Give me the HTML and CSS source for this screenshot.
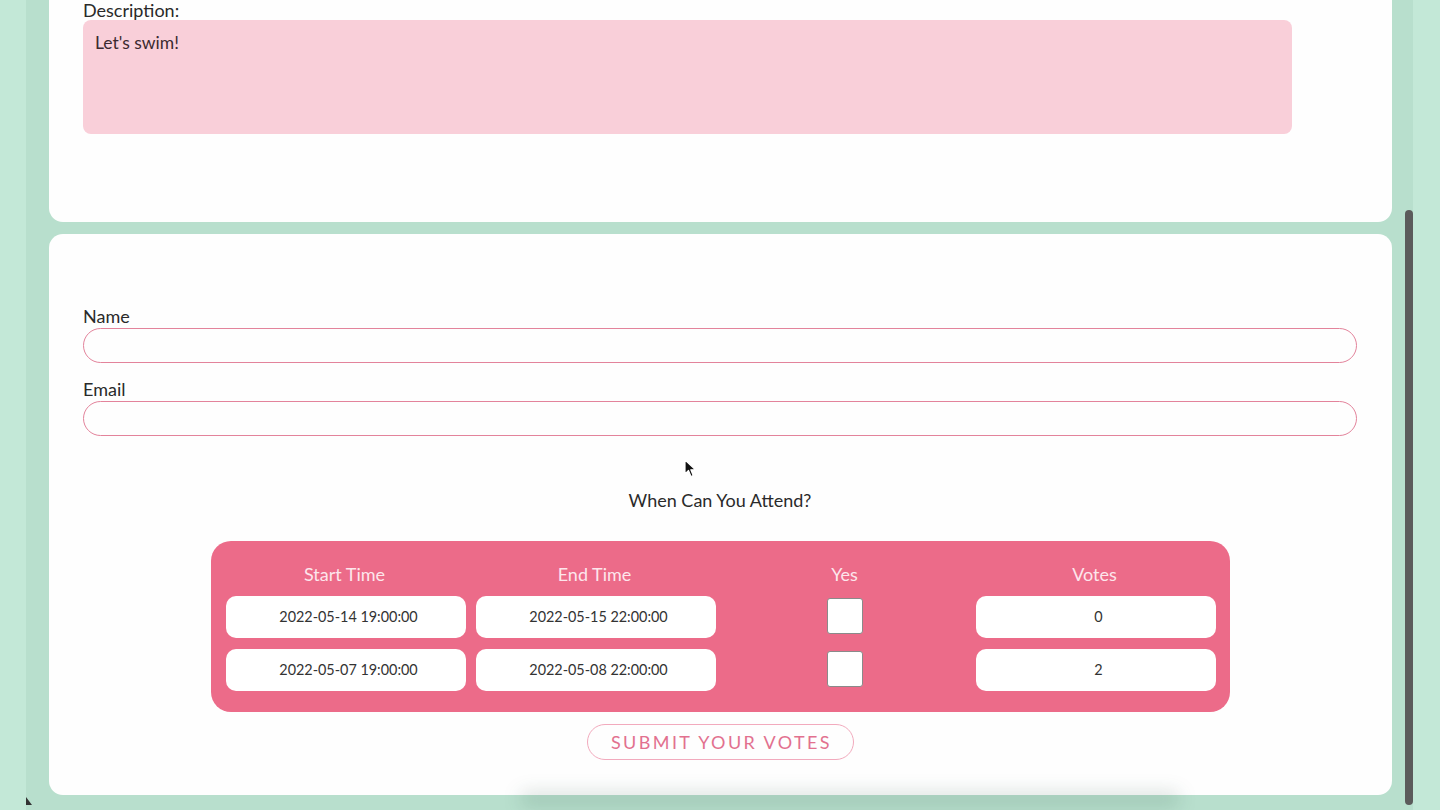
FILE: index.html
```html
<!DOCTYPE html>
<html lang="en">
<head>
<meta charset="utf-8">
<title>Event</title>
<link rel="stylesheet" href="styles.css">
</head>
<body>
<div class="frame">
  <div class="content">
    <section class="card card-top">
      <label class="label">Description:</label>
      <div class="textarea">Let's swim!</div>
    </section>
    <section class="card card-form">
      <label class="label">Name</label>
      <div class="input"></div>
      <label class="label label-gap">Email</label>
      <div class="input"></div>
      <h2 class="question">When Can You Attend?</h2>
      <div class="table">
        <div class="th">Start Time</div>
        <div class="th">End Time</div>
        <div class="th">Yes</div>
        <div class="th">Votes</div>

        <div class="cell">2022-05-14 19:00:00</div>
        <div class="cell">2022-05-15 22:00:00</div>
        <div class="cbwrap"><span class="checkbox"></span></div>
        <div class="cell">0</div>

        <div class="cell">2022-05-07 19:00:00</div>
        <div class="cell">2022-05-08 22:00:00</div>
        <div class="cbwrap"><span class="checkbox"></span></div>
        <div class="cell">2</div>
      </div>
      <div class="actions"><button class="submit">Submit your votes</button></div>
    </section>
  </div>
  <div class="scrollbar"></div>
</div>
<div class="bottom-shadow"></div>
<svg class="cursor" width="14" height="20" viewBox="0 0 14 20"><path d="M1 1 L1 15 L4.5 11.5 L7 17.5 L9.2 16.6 L6.8 10.8 L11.5 10.8 Z" fill="#111" stroke="#fff" stroke-width="1.2" stroke-linejoin="round"/></svg>
<svg class="corner" width="6" height="8" viewBox="0 0 6 8"><path d="M0 0 L0 8 L6 8 Z" fill="#333"/></svg>
</body>
</html>
```
FILE: styles.css
```css
html, body {
  margin: 0;
  padding: 0;
  height: 810px;
  overflow: hidden;
}
body {
  background: #c3e8d7;
  font-family: Lato, "Open Sans", sans-serif;
  color: #2c2c2c;
  position: relative;
}
.frame {
  margin-left: 26px;
  width: 1387px;
  height: 810px;
  background: #b8dfcd;
  position: relative;
}
.content {
  padding-left: 23px;
  width: 1343px;
  display: flex;
  flex-direction: column;
  gap: 12px;
}
.card {
  background: #fefefe;
  border-radius: 14px;
  box-sizing: border-box;
  padding-left: 34px;
  padding-right: 35px;
}
.card-top {
  border-radius: 0 0 14px 14px;
  height: 222px;
  padding-right: 100px;
}
.label {
  display: block;
  font-size: 18px;
  line-height: 18px;
  height: 18px;
  padding-bottom: 3px;
  color: #2a2a2a;
}
.card-top .label {
  line-height: 20px;
  padding-bottom: 0;
  height: 20px;
}
.textarea {
  height: 114px;
  background: #f9cfd9;
  border-radius: 8px;
  box-sizing: border-box;
  padding: 12px 12px;
  font-size: 17.5px;
  line-height: 22px;
  color: #3b2a30;
}
.card-form {
  height: 561px;
  padding-top: 73px;
  position: relative;
}
.label-gap {
  margin-top: 17px;
}
.input {
  height: 35px;
  border: 1.5px solid #e3839b;
  border-radius: 18px;
  box-sizing: border-box;
  background: #fefefe;
}
.question {
  margin: 53px 0 0;
  font-weight: 400;
  font-size: 18px;
  line-height: 22px;
  text-align: center;
  color: #2a2a2a;
}
.table {
  margin: 30px auto 0;
  width: 1019px;
  box-sizing: border-box;
  background: #ec6b89;
  border-radius: 20px;
  padding: 22px 9px 21px 9px;
  display: grid;
  grid-template-columns: repeat(4, 250px);
  row-gap: 11px;
}
.th {
  text-align: center;
  font-size: 18px;
  line-height: 22px;
  color: #fde6ec;
}
.cell {
  margin: 0 4px 0 6px;
  height: 42px;
  box-sizing: border-box;
  background: #fff;
  border-radius: 10px;
  display: flex;
  align-items: center;
  justify-content: center;
  font-size: 14.4px;
  color: #333;
  padding: 0 0 2px 6px;
}
.cbwrap {
  display: flex;
  align-items: center;
  justify-content: center;
}
.checkbox {
  width: 34px;
  height: 34px;
  background: #fff;
  border: 1px solid #8a8a8a;
  border-radius: 3px;
  margin: -3px 0 0 1px;
}
.actions {
  display: flex;
  justify-content: center;
  margin-top: 12px;
}
.submit {
  width: 267px;
  height: 36px;
  background: #fefefe;
  border: 1.5px solid #f2aabd;
  border-radius: 18px;
  font-family: Lato, "Open Sans", sans-serif;
  font-size: 18px;
  letter-spacing: 2.4px;
  text-transform: uppercase;
  color: #e2718f;
  padding: 0 0 0 3px;
}
.scrollbar {
  position: absolute;
  right: 0;
  top: 210px;
  width: 8px;
  height: 595px;
  background: #5b5b5b;
  border-radius: 4px;
}
.bottom-shadow {
  position: absolute;
  left: 520px;
  width: 660px;
  top: 792px;
  height: 14px;
  background: rgba(20, 60, 45, 0.16);
  filter: blur(9px);
  border-radius: 10px;
}
.cursor {
  position: absolute;
  left: 684px;
  top: 459px;
}
.corner {
  position: absolute;
  left: 26px;
  top: 797px;
}
```
